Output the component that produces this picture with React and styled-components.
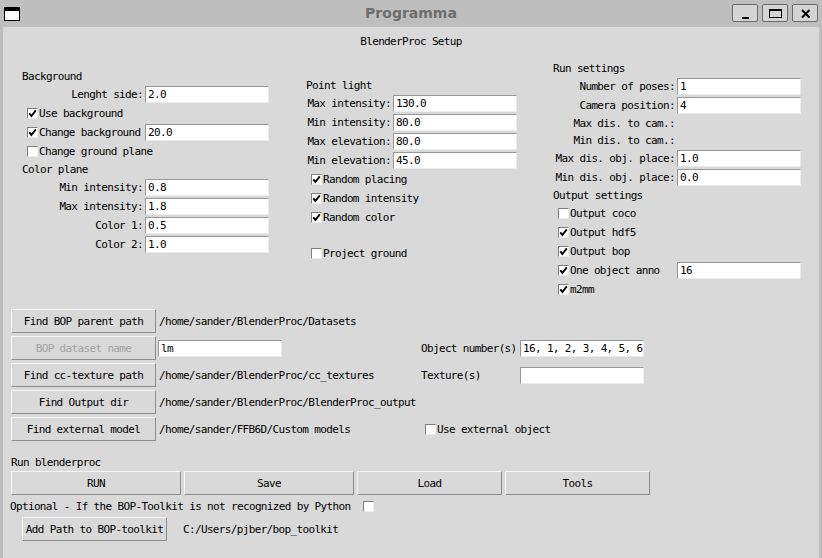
import React from 'react';
import styled, { createGlobalStyle } from 'styled-components';

const GlobalStyle = createGlobalStyle`
  body {
    margin: 0;
    background: #bebebe;
  }
`;

const leftRows = [
  { kind: 'head', text: 'Background' },
  { kind: 'field', label: 'Lenght side:', value: '2.0' },
  { kind: 'check', label: 'Use background', on: true },
  { kind: 'check', label: 'Change background', on: true, value: '20.0' },
  { kind: 'check', label: 'Change ground plane' },
  { kind: 'head', text: 'Color plane' },
  { kind: 'field', label: 'Min intensity:', value: '0.8' },
  { kind: 'field', label: 'Max intensity:', value: '1.8' },
  { kind: 'field', label: 'Color 1:', value: '0.5' },
  { kind: 'field', label: 'Color 2:', value: '1.0' },
];

const midRows = [
  { kind: 'head', text: 'Point light' },
  { kind: 'field', label: 'Max intensity:', value: '130.0' },
  { kind: 'field', label: 'Min intensity:', value: '80.0' },
  { kind: 'field', label: 'Max elevation:', value: '80.0' },
  { kind: 'field', label: 'Min elevation:', value: '45.0' },
  { kind: 'check', label: 'Random placing', on: true },
  { kind: 'check', label: 'Random intensity', on: true },
  { kind: 'check', label: 'Random color', on: true },
  { kind: 'head', text: '' },
  { kind: 'check', label: 'Project ground' },
];

const rightRows = [
  { kind: 'head', text: 'Run settings' },
  { kind: 'field', label: 'Number of poses:', value: '1' },
  { kind: 'field', label: 'Camera position:', value: '4' },
  { kind: 'label', label: 'Max dis. to cam.:' },
  { kind: 'label', label: 'Min dis. to cam.:' },
  { kind: 'field', label: 'Max dis. obj. place:', value: '1.0' },
  { kind: 'field', label: 'Min dis. obj. place:', value: '0.0' },
  { kind: 'head', text: 'Output settings' },
  { kind: 'check', label: 'Output coco' },
  { kind: 'check', label: 'Output hdf5', on: true },
  { kind: 'check', label: 'Output bop', on: true },
  { kind: 'check', label: 'One object anno', on: true, value: '16' },
  { kind: 'check', label: 'm2mm', on: true },
];

const App = () => (
  <Win>
    <GlobalStyle />
    <TitleBar>
      <AppIcon />
      <Title>Programma</Title>
      <WinButtons>
        <WinButton>
          <svg width="24" height="16" viewBox="0 0 24 16">
            <rect x="9" y="12" width="7" height="2" fill="#000" />
          </svg>
        </WinButton>
        <WinButton>
          <svg width="24" height="16" viewBox="0 0 24 16">
            <rect x="6.5" y="4.5" width="12" height="8" fill="none" stroke="#000" />
            <rect x="6" y="4" width="13" height="2" fill="#000" />
          </svg>
        </WinButton>
        <WinButton>
          <svg width="24" height="16" viewBox="0 0 24 16">
            <path d="M9 5 L16.5 12.5 M16.5 5 L9 12.5" stroke="#000" strokeWidth="2" />
          </svg>
        </WinButton>
      </WinButtons>
    </TitleBar>

    <Content>
      <Heading>BlenderProc Setup</Heading>

      <Columns>
        <Form rows={leftRows} lw={121} $w={247} $ml={0} $mt={17} />
        <Form rows={midRows} lw={85} $w={211} $ml={37} $mt={26} />
        <Form rows={rightRows} lw={122} $w={248} $ml={36} $mt={9} />
      </Columns>

      <FileGrid>
        <Button>Find BOP parent path</Button>
        <PathText>/home/sander/BlenderProc/Datasets</PathText>
        <span />
        <span />

        <Button disabled>BOP dataset name</Button>
        <PathCell>
          <Entry readOnly defaultValue="lm" />
        </PathCell>
        <span>Object number(s)</span>
        <Entry readOnly defaultValue="16, 1, 2, 3, 4, 5, 6" />

        <Button>Find cc-texture path</Button>
        <PathText>/home/sander/BlenderProc/cc_textures</PathText>
        <span>Texture(s)</span>
        <Entry readOnly defaultValue="" />

        <Button>Find Output dir</Button>
        <PathText>/home/sander/BlenderProc/BlenderProc_output</PathText>
        <span />
        <span />

        <Button>Find external model</Button>
        <PathText>/home/sander/FFB6D/Custom models</PathText>
        <ExternalCheck>
          <Check />
          Use external object
        </ExternalCheck>
      </FileGrid>

      <RunLabel>Run blenderproc</RunLabel>
      <RunBar>
        <Button $w={170}>RUN</Button>
        <Button $w={170}>Save</Button>
        <Button $w={145}>Load</Button>
        <Button $w={145}>Tools</Button>
      </RunBar>

      <OptionalRow>
        Optional - If the BOP-Toolkit is not recognized by Python
        <Check $ml={13} />
      </OptionalRow>
      <ToolkitRow>
        <Button $w={145}>Add Path to BOP-toolkit</Button>
        <ToolkitPath>C:/Users/pjber/bop_toolkit</ToolkitPath>
      </ToolkitRow>
    </Content>
  </Win>
);

const Form = ({ rows, lw, ...rest }) => (
  <Column {...rest}>
    {rows.map((r, i) => {
      if (r.kind === 'head') return <SectionHead key={i}>{r.text}</SectionHead>;
      if (r.kind === 'label')
        return (
          <LabelRow key={i}>
            <FieldLabel $w={lw}>{r.label}</FieldLabel>
          </LabelRow>
        );
      if (r.kind === 'field')
        return (
          <Row key={i}>
            <FieldLabel $w={lw}>{r.label}</FieldLabel>
            <Entry readOnly defaultValue={r.value} />
          </Row>
        );
      return (
        <Row key={i}>
          <CheckLabel $w={r.value ? lw + 2 : null}>
            <Check on={r.on} />
            {r.label}
          </CheckLabel>
          {r.value && <Entry readOnly defaultValue={r.value} />}
        </Row>
      );
    })}
  </Column>
);

const Check = ({ on, $ml }) => (
  <CheckBox $ml={$ml}>
    {on && (
      <svg width="9" height="9" viewBox="0 0 9 9">
        <path d="M1.3 4.3 L3.4 7 L7.8 1.4" fill="none" stroke="#000" strokeWidth="1.9" />
      </svg>
    )}
  </CheckBox>
);

export default App;

const Win = styled.div`
  width: 822px;
  height: 558px;
  display: flex;
  flex-direction: column;
  background: #bebebe;
  overflow: hidden;
`;

const TitleBar = styled.div`
  height: 27px;
  flex-shrink: 0;
  display: grid;
  grid-template-columns: 1fr auto 1fr;
  align-items: start;
`;

const AppIcon = styled.div`
  width: 16px;
  height: 14px;
  margin: 7px 0 0 4px;
  box-sizing: border-box;
  border: 1px solid #000;
  border-top: 4px solid #000;
  background: #fff;
`;

const Title = styled.div`
  font-family: 'DejaVu Sans', sans-serif;
  font-weight: bold;
  font-size: 14px;
  line-height: 26px;
  color: #6e6e6e;
`;

const WinButtons = styled.div`
  justify-self: end;
  display: flex;
  gap: 4px;
  margin: 4px 4px 0 0;
`;

const WinButton = styled.div`
  width: 26px;
  height: 18px;
  box-sizing: border-box;
  border: 1px solid #6a6a6a;
  border-radius: 2px;
  background: #d4d4d4;
  display: flex;
`;

const Content = styled.div`
  flex: 1;
  margin: 0 3px;
  background: #d9d9d9;
  color: #000;
  font-family: 'DejaVu Sans Mono', monospace;
  font-size: 11px;
  letter-spacing: -0.65px;
  display: flex;
  flex-direction: column;
`;

const Heading = styled.div`
  padding-top: 5px;
  height: 19px;
  line-height: 19px;
  text-align: center;
`;

const Columns = styled.div`
  display: flex;
  align-items: flex-start;
  padding-left: 19px;
`;

const Column = styled.div`
  width: ${(p) => p.$w}px;
  margin-left: ${(p) => p.$ml}px;
  margin-top: ${(p) => p.$mt}px;
  display: flex;
  flex-direction: column;
`;

const SectionHead = styled.div`
  height: 17px;
  line-height: 17px;
`;

const Row = styled.div`
  height: 19px;
  display: flex;
  align-items: center;
`;

const LabelRow = styled(Row)`
  height: 17px;
`;

const FieldLabel = styled.span`
  width: ${(p) => p.$w}px;
  margin-right: 2px;
  text-align: right;
  white-space: nowrap;
`;

const CheckLabel = styled.label`
  display: flex;
  align-items: center;
  padding-left: 5px;
  box-sizing: border-box;
  white-space: nowrap;
  ${(p) => (p.$w ? `width: ${p.$w}px;` : '')}
`;

const CheckBox = styled.span`
  width: 11px;
  height: 11px;
  margin-right: 1px;
  margin-left: ${(p) => p.$ml || 0}px;
  box-sizing: border-box;
  border: 1px solid;
  border-color: #7f7f7f #ececec #ececec #7f7f7f;
  background: #fff;
  display: inline-flex;
  flex-shrink: 0;
`;

const Entry = styled.input`
  width: 124px;
  height: 17px;
  margin: 0;
  padding: 0 0 0 2px;
  box-sizing: border-box;
  border: 1px solid;
  border-color: #979797 #ececec #ececec #979797;
  background: #fff;
  font: inherit;
  letter-spacing: inherit;
  color: #000;
  outline: none;
`;

const FileGrid = styled.div`
  display: grid;
  grid-template-columns: 145px 265px 99px 124px;
  grid-auto-rows: 24px;
  row-gap: 3px;
  align-items: center;
  margin-top: 10px;
  padding-left: 8px;
  white-space: nowrap;
`;

const Button = styled.div`
  ${(p) => (p.$w ? `width: ${p.$w}px;` : '')}
  height: 24px;
  box-sizing: border-box;
  border: 1px solid;
  border-color: #f7f7f7 #8c8c8c #8c8c8c #f7f7f7;
  background: #d9d9d9;
  display: flex;
  align-items: center;
  justify-content: center;
  white-space: nowrap;
  color: ${(p) => (p.disabled ? '#a3a3a3' : '#000')};
`;

const PathText = styled.span`
  padding-left: 3px;
`;

const PathCell = styled.div`
  padding-left: 2px;
  display: flex;
`;

const ExternalCheck = styled.label`
  grid-column: 3 / span 2;
  display: flex;
  align-items: center;
  padding-left: 4px;
`;

const RunLabel = styled.div`
  margin-top: 13px;
  padding-left: 8px;
  height: 17px;
  line-height: 17px;
`;

const RunBar = styled.div`
  display: flex;
  gap: 3px;
  padding-left: 8px;
`;

const OptionalRow = styled.div`
  height: 22px;
  display: flex;
  align-items: center;
  padding-left: 7px;
  white-space: nowrap;
`;

const ToolkitRow = styled.div`
  display: flex;
  align-items: center;
  padding-left: 19px;
`;

const ToolkitPath = styled.span`
  margin-left: 16px;
`;
